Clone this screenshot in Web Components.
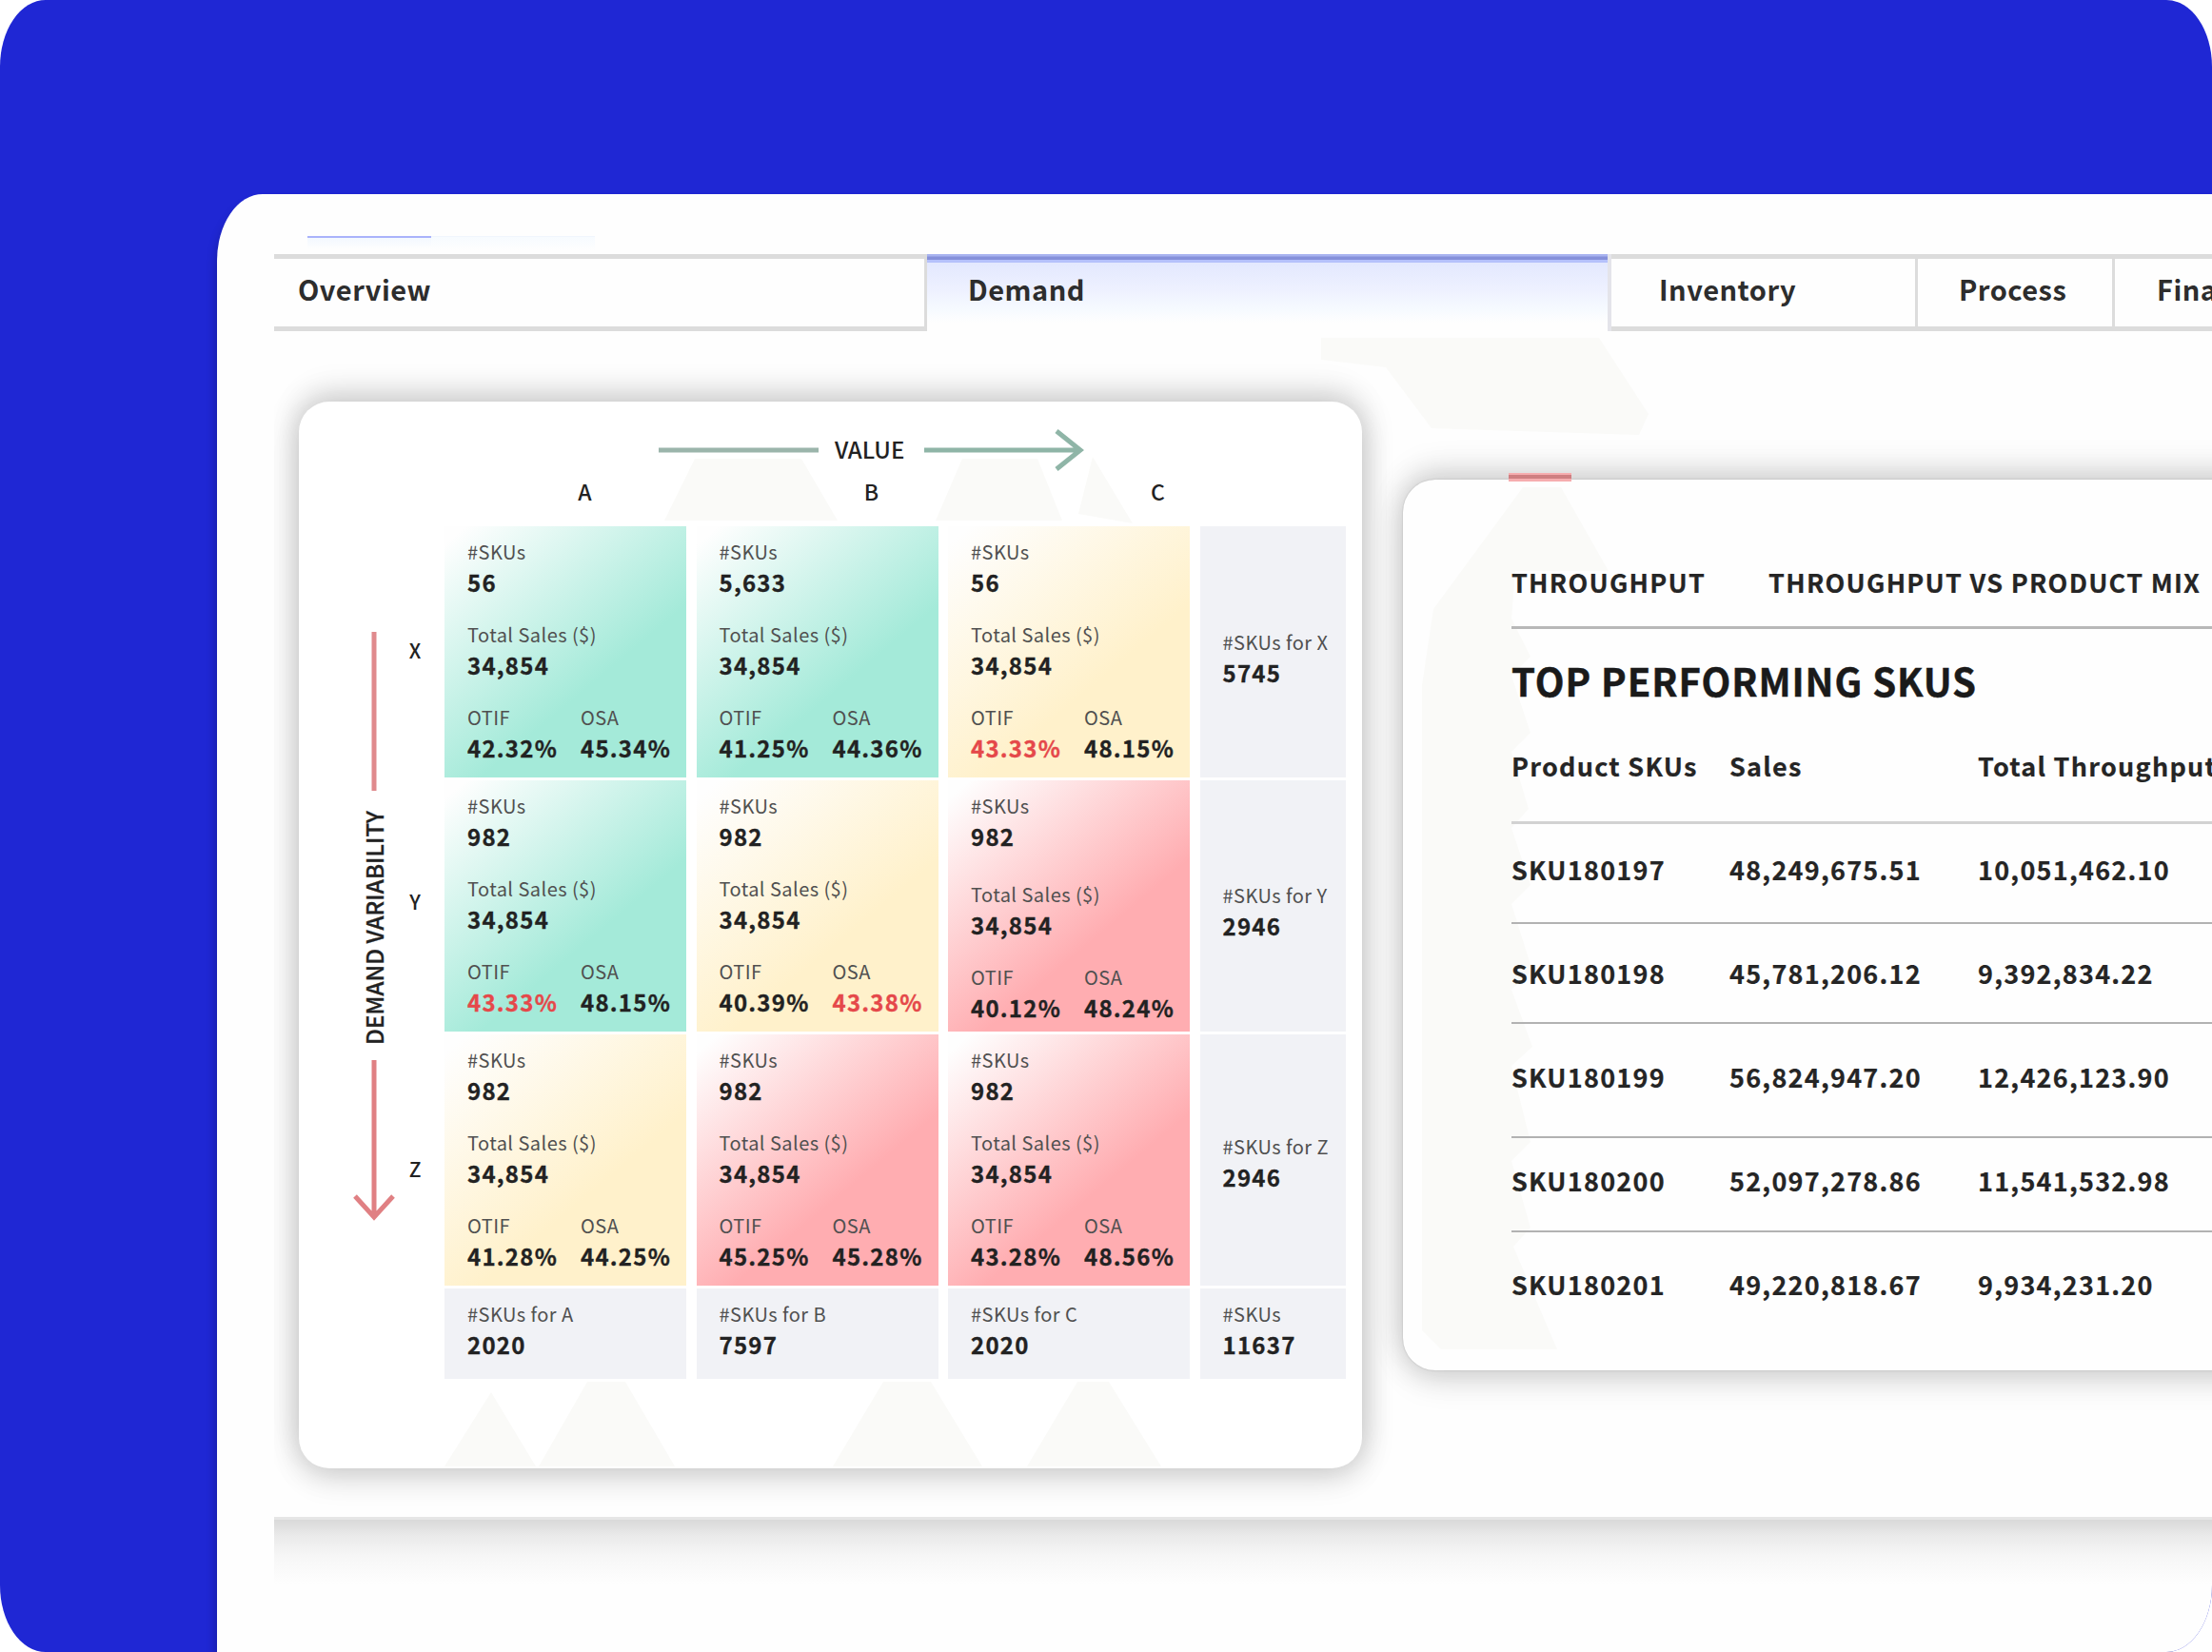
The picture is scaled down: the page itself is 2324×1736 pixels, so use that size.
<!DOCTYPE html>
<html lang="en">
<head>
<meta charset="UTF-8">
<title>Demand dashboard</title>
<style>
  body {
    margin: 0;
    background: #fff;
    overflow: hidden;
    font-family: "Noto Sans CJK SC", "Noto Sans", sans-serif;
    color: #222;
  }
</style>
</head>
<body>
<app-stage>
  <tab-bar slot="tabs">
    <tab-item style="--w: 686px; --pad: 25px">Overview</tab-item>
    <tab-item active style="--w: 719px; --pad: 43px">Demand</tab-item>
    <tab-item style="--w: 322px; --pad: 50px">Inventory</tab-item>
    <tab-item style="--w: 207px; --pad: 43px">Process</tab-item>
    <tab-item style="--w: 102px; --pad: 44px">Fina</tab-item>
  </tab-bar>
  <matrix-card></matrix-card>
  <throughput-card></throughput-card>
</app-stage>

<script>
class AppStage extends HTMLElement {
  connectedCallback() {
    this.attachShadow({ mode: 'open' });
    this.shadowRoot.innerHTML = `
      <style>
        :host {
          display: flex;
          box-sizing: border-box;
          width: 2324px;
          height: 1736px;
          padding: 204px 0 0 228px;
          background: #1f27d4;
          border-radius: 48px / 70px;
          overflow: hidden;
        }

        .panel {
          flex: 1;
          min-width: 0;
          box-sizing: border-box;
          padding: 44px 0 0 60px;
          background: #fefefe;
          border-radius: 48px 0 0 0 / 70px 0 0 0;
          box-shadow: 0 10px 12px rgba(0, 0, 0, 0.3);
        }

        .board {
          overflow: hidden;
          background: #fefefe;
        }

        .strip {
          display: flex;
          height: 19px;
          padding-left: 35px;
        }

        .strip i {
          width: 130px;
          border-top: 2px solid #aab3fb;
          background: linear-gradient(#f3f8ff, #fefefe 70%);
        }

        .strip b {
          width: 172px;
          border-top: 1px solid #f1f6fd;
          background: linear-gradient(#f7fbff, #fefefe 80%);
        }

        .cards {
          display: flex;
          align-items: flex-start;
          position: relative;
          height: 1172px;
          padding: 73px 0 0 26px;
        }

        .tint {
          position: absolute;
          left: 1100px;
          top: 6px;
        }

        .foot {
          height: 68px;
          border-top: 3px solid #e6e6e6;
          background: linear-gradient(#d9d9d9, #eaeaea 25%, #f6f6f6 55%, #fefefe);
        }
      </style>
      <section class="panel">
        <div class="board">
          <div class="strip"><i></i><b></b></div>
          <slot name="tabs"></slot>
          <div class="cards">
            <svg class="tint" width="346" height="104"><path fill="#fafaf8" d="M0 0h292l52 80-10 22-218-7-48-64L0 23z"/></svg>
            <slot></slot>
          </div>
          <div class="foot"></div>
        </div>
      </section>
    `;
  }
}

class TabBar extends HTMLElement {
  connectedCallback() {
    this.attachShadow({ mode: 'open' });
    this.shadowRoot.innerHTML = `
      <style>
        :host {
          display: flex;
          height: 82px;
        }
      </style>
      <slot></slot>
    `;
  }
}

class TabItem extends HTMLElement {
  connectedCallback() {
    this.attachShadow({ mode: 'open' });
    this.shadowRoot.innerHTML = `
      <style>
        :host {
          display: flex;
          flex: none;
          align-items: center;
          box-sizing: border-box;
          width: var(--w);
          height: 81px;
          padding: 0 0 10px var(--pad);
          border: solid #dcdcdc;
          border-width: 5px 3px 5px 0;
          font-size: 29px;
          font-weight: 700;
          letter-spacing: 0.5px;
          line-height: 40px;
          white-space: nowrap;
          color: #2d2d2d;
        }

        :host([active]) {
          border-width: 0 4px 0 0;
          border-right-color: #e4e4ea;
          background: linear-gradient(#a9b4f0 2px, #8590da 3px, #8590da 6px, #b5c1fb 6px, #b5c1fb 9px, #e3e8fe 9px, #eef1ff 38px, #f6faff 58px, #fefefe 72px);
        }

        :host(:last-child) {
          border-right: 0;
        }
      </style>
      <slot></slot>
    `;
  }
}

// label over value, the text unit shared by every matrix cell
class MetricPair extends HTMLElement {
  connectedCallback() {
    this.attachShadow({ mode: 'open' });
    this.shadowRoot.innerHTML = `
      <style>
        :host {
          display: block;
          white-space: nowrap;
        }

        .label {
          height: 30px;
          font-size: 20px;
          letter-spacing: 0.45px;
          line-height: 30px;
          color: #505050;
        }

        .value {
          height: 32px;
          font-size: 24px;
          font-weight: 700;
          letter-spacing: 1.25px;
          line-height: 33px;
          color: #222;
          -webkit-text-stroke: 0.3px;
        }

        :host([alert]) .value {
          color: #e5484a;
        }
      </style>
      <div class="label">${this.getAttribute('label')}</div>
      <div class="value"><slot></slot></div>
    `;
  }
}

class MatrixCell extends HTMLElement {
  connectedCallback() {
    const [skus, otif, osa] = this.getAttribute('values').split('|');
    const low = this.getAttribute('low');
    this.attachShadow({ mode: 'open' });
    this.shadowRoot.innerHTML = `
      <style>
        :host {
          display: flex;
          flex-direction: column;
          gap: 25px;
          box-sizing: border-box;
          padding: 12px 0 0 24px;
          background: linear-gradient(140deg, #fefefe 4%, var(--tone) 62%);
        }

        :host([tone="green"]) { --tone: #a4ead9; }
        :host([tone="yellow"]) { --tone: #fff1cb; }
        :host([tone="red"]) { --tone: #ffadb1; }

        :host([loose]) .skus {
          margin-bottom: 6px;
        }

        .rates {
          display: grid;
          grid-template-columns: 119px 1fr;
        }
      </style>
      <metric-pair class="skus" label="#SKUs">${skus}</metric-pair>
      <metric-pair label="Total Sales ($)">34,854</metric-pair>
      <div class="rates">
        <metric-pair label="OTIF" ${low === 'otif' ? 'alert' : ''}>${otif}</metric-pair>
        <metric-pair label="OSA" ${low === 'osa' ? 'alert' : ''}>${osa}</metric-pair>
      </div>
    `;
  }
}

class TotalCell extends HTMLElement {
  connectedCallback() {
    this.attachShadow({ mode: 'open' });
    this.shadowRoot.innerHTML = `
      <style>
        :host {
          display: block;
          box-sizing: border-box;
          padding: var(--top, 12px) 0 0 24px;
          background: #f1f2f6;
        }
      </style>
      <metric-pair label="${this.getAttribute('label')}"><slot></slot></metric-pair>
    `;
  }
}

class MatrixCard extends HTMLElement {
  connectedCallback() {
    this.attachShadow({ mode: 'open' });
    this.shadowRoot.innerHTML = `
      <style>
        :host {
          display: grid;
          flex: none;
          position: relative;
          grid-template: 131px 896px / 153px 947px;
          width: 1117px;
          height: 1121px;
          border-radius: 32px;
          background: #fff;
          box-shadow: 0 0 30px 6px rgba(0, 0, 0, 0.13), 0 -14px 34px -2px rgba(0, 0, 0, 0.09), 0 14px 34px -2px rgba(0, 0, 0, 0.09);
        }

        .tint {
          position: absolute;
          left: 0;
          top: 0;
        }

        .x-axis {
          grid-column: 2;
          position: relative;
          padding-top: 28px;
          font-size: 24px;
          font-weight: 500;
          line-height: 30px;
        }

        .arrow {
          display: flex;
          align-items: center;
          height: 46px;
          padding-left: 225px;
        }

        .arrow span {
          width: 94px;
          margin-left: 17px;
          padding-bottom: 3px;
        }

        svg {
          display: block;
          flex: none;
          fill: none;
          stroke-width: 5;
        }

        .letters {
          display: grid;
          grid-template-columns: repeat(3, 301px);
          margin: 5px 0 0 -3px;
          text-align: center;
          font-size: 23px;
        }

        .y-axis {
          display: flex;
          position: relative;
          padding: 109px 0 0 57px;
          font-size: 24px;
          font-weight: 500;
        }

        .y-axis .line {
          display: flex;
          flex-direction: column;
          align-items: center;
          width: 44px;
        }

        .y-axis .line span {
          height: 249px;
          margin: 18px 0 16px;
          letter-spacing: 0.1px;
          line-height: 32px;
          writing-mode: vertical-rl;
          transform: rotate(180deg);
          white-space: nowrap;
          -webkit-text-stroke: 0.3px;
        }

        .y-axis .rows {
          width: 42px;
          font-size: 21px;
          line-height: 30px;
          text-align: center;
        }

        .y-axis .rows div:nth-child(1) { padding-top: 6px; }
        .y-axis .rows div:nth-child(2) { padding-top: 234px; }
        .y-axis .rows div:nth-child(3) { padding-top: 251px; }

        .matrix {
          display: grid;
          position: relative;
          grid-template: repeat(3, 264px) 95px / repeat(3, 254px) 153px;
          gap: 3px 10.5px;
        }
      </style>
      <svg class="tint" width="1117" height="1121">
        <path fill="#fafaf8" d="M416 60h112l38 65H384zM697 60h79l26 65H669zM834 58l42 70-57-10zM202 1041l47 78H153zM303 1030h40l52 89H252zM614 1030h50l54 89H561zM818 1030h33l55 89H765z"/>
      </svg>
      <div class="x-axis">
        <div class="arrow">
          <svg width="168" height="46" stroke="#9bb5ab"><path d="M0 23h168"/></svg>
          <span>VALUE</span>
          <svg width="170" height="46" stroke="#8fb5a7"><path d="M0 23h162M139 3l25 20-25 20"/></svg>
        </div>
        <div class="letters"><div>A</div><div>B</div><div>C</div></div>
      </div>
      <div class="y-axis">
        <div class="line">
          <svg width="44" height="169" stroke="#e08a8d"><path d="M22 2v167"/></svg>
          <span>DEMAND VARIABILITY</span>
          <svg width="44" height="172" stroke="#e08083"><path d="M22 0v164M2 143l20 22 20-22"/></svg>
        </div>
        <div class="rows"><div>X</div><div>Y</div><div>Z</div></div>
      </div>
      <div class="matrix">
        <matrix-cell tone="green" values="56|42.32%|45.34%"></matrix-cell>
        <matrix-cell tone="green" values="5,633|41.25%|44.36%"></matrix-cell>
        <matrix-cell tone="yellow" values="56|43.33%|48.15%" low="otif"></matrix-cell>
        <total-cell label="#SKUs for X" style="--top: 107px">5745</total-cell>
        <matrix-cell tone="green" values="982|43.33%|48.15%" low="otif"></matrix-cell>
        <matrix-cell tone="yellow" values="982|40.39%|43.38%" low="osa"></matrix-cell>
        <matrix-cell tone="red" values="982|40.12%|48.24%" loose></matrix-cell>
        <total-cell label="#SKUs for Y" style="--top: 106px">2946</total-cell>
        <matrix-cell tone="yellow" values="982|41.28%|44.25%"></matrix-cell>
        <matrix-cell tone="red" values="982|45.25%|45.28%"></matrix-cell>
        <matrix-cell tone="red" values="982|43.28%|48.56%"></matrix-cell>
        <total-cell label="#SKUs for Z" style="--top: 103px">2946</total-cell>
        <total-cell label="#SKUs for A">2020</total-cell>
        <total-cell label="#SKUs for B">7597</total-cell>
        <total-cell label="#SKUs for C">2020</total-cell>
        <total-cell label="#SKUs">11637</total-cell>
      </div>
    `;
  }
}

class ThroughputCard extends HTMLElement {
  connectedCallback() {
    // sku, sales, throughput, row height, space above the text
    const rows = [
      ['SKU180197', '48,249,675.51', '10,051,462.10', 105, 28],
      ['SKU180198', '45,781,206.12', '9,392,834.22', 105, 32],
      ['SKU180199', '56,824,947.20', '12,426,123.90', 120, 36],
      ['SKU180200', '52,097,278.86', '11,541,532.98', 99, 25],
      ['SKU180201', '49,220,818.67', '9,934,231.20', 96, 35]
    ];
    this.attachShadow({ mode: 'open' });
    this.shadowRoot.innerHTML = `
      <style>
        :host {
          display: block;
          flex: 1;
          position: relative;
          box-sizing: border-box;
          min-width: 0;
          height: 936px;
          margin: 82px -80px 0 43px;
          padding: 88px 0 0 114px;
          border-radius: 34px 0 0 34px;
          background: #fefefe;
          box-shadow: 0 0 30px 6px rgba(0, 0, 0, 0.1), 0 -14px 34px -2px rgba(0, 0, 0, 0.1), 0 14px 34px -2px rgba(0, 0, 0, 0.1), 0 0 2px rgba(0, 0, 0, 0.2);
          font-size: 27px;
          font-weight: 700;
          letter-spacing: 1.25px;
          line-height: 40px;
          white-space: nowrap;
          color: #252525;
          -webkit-text-stroke: 0.2px;
        }

        .tint {
          position: absolute;
          left: 0;
          top: 0;
        }

        .marker {
          position: absolute;
          left: 111px;
          top: -7px;
          width: 66px;
          height: 4px;
          border: solid #f6adaf;
          border-width: 2px 0 3px;
          background: #cf7f81;
        }

        .views {
          display: flex;
          position: relative;
          gap: 66px;
          height: 66px;
          border-bottom: 3px solid #b8b8b8;
        }

        h2 {
          position: relative;
          height: 55px;
          margin: 28px 0 0;
          font-size: 40px;
          letter-spacing: 0.95px;
          line-height: 52px;
          color: #1a1a1a;
          -webkit-text-stroke: 0.5px;
        }

        .row {
          display: grid;
          position: relative;
          box-sizing: border-box;
          grid-template-columns: 229px 261px 1fr;
          border-bottom: 2px solid #b2b2b2;
        }

        .head {
          height: 122px;
          padding-top: 41px;
          border-bottom: 3px solid #d2d2d2;
        }

        .row:last-child {
          border-bottom: 0;
        }
      </style>
      <svg class="tint" width="230" height="936">
        <path fill="#fafaf8" d="M126 8h40l50 88H118l-4 50 20 40-20 20 20 60-20 20 18 60-18 20 20 60-20 20 22 70-22 20 22 60-22 20 20 80-20 20 20 70-18 20 46 108H40l-20-20V216l12-80z"/>
      </svg>
      <div class="marker"></div>
      <div class="views"><span>THROUGHPUT</span><span>THROUGHPUT VS PRODUCT MIX</span></div>
      <h2>TOP PERFORMING SKUS</h2>
      <div class="row head"><span>Product SKUs</span><span>Sales</span><span>Total Throughput</span></div>
      ${rows.map(([sku, sales, total, height, pad]) => `
        <div class="row" style="height: ${height}px; padding-top: ${pad}px">
          <span>${sku}</span><span>${sales}</span><span>${total}</span>
        </div>`).join('')}
    `;
  }
}

customElements.define('app-stage', AppStage);
customElements.define('tab-bar', TabBar);
customElements.define('tab-item', TabItem);
customElements.define('metric-pair', MetricPair);
customElements.define('matrix-cell', MatrixCell);
customElements.define('total-cell', TotalCell);
customElements.define('matrix-card', MatrixCard);
customElements.define('throughput-card', ThroughputCard);
</script>
</body>
</html>
